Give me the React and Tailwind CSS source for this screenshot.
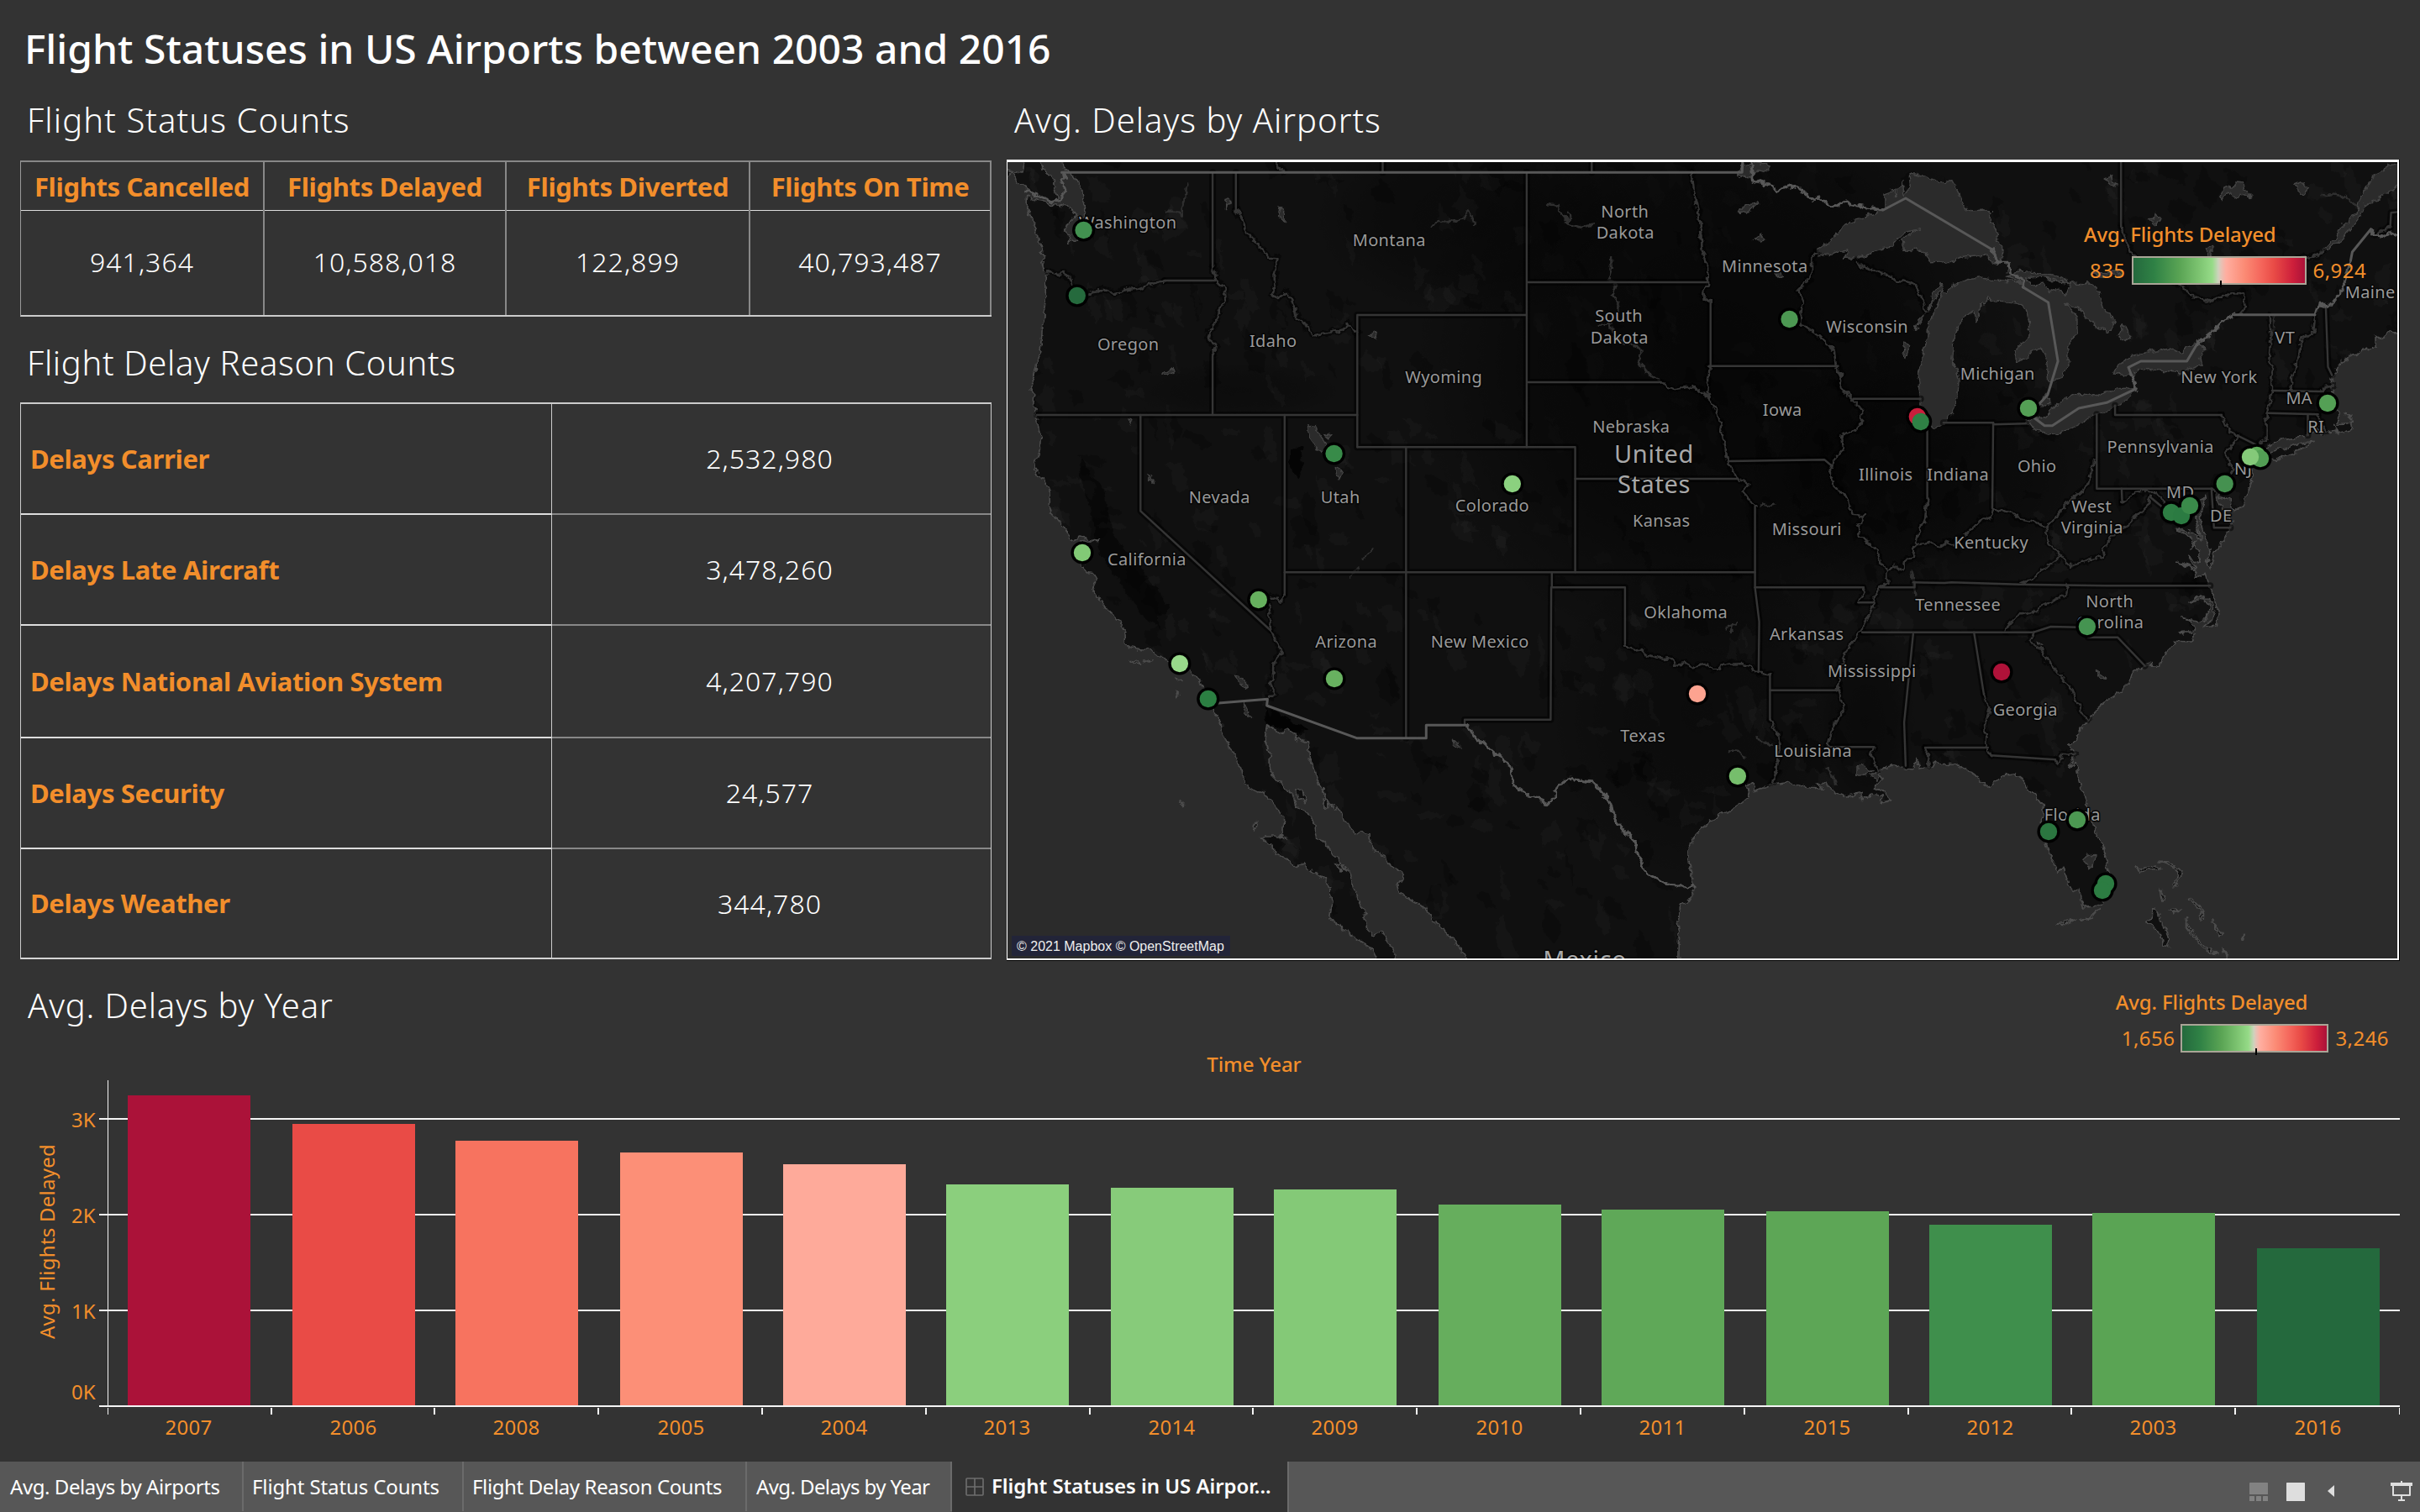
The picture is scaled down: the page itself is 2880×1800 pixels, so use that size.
import React from "react";

/* ---------------------------------------------------------------- data */

const statusCounts = [
  ["Flights Cancelled", "941,364"],
  ["Flights Delayed", "10,588,018"],
  ["Flights Diverted", "122,899"],
  ["Flights On Time", "40,793,487"],
];

const delayReasons = [
  ["Delays Carrier", "2,532,980", "h-[132px]"],
  ["Delays Late Aircraft", "3,478,260", "h-[132px]"],
  ["Delays National Aviation System", "4,207,790", "h-[134px]"],
  ["Delays Security", "24,577", "h-[132px]"],
  ["Delays Weather", "344,780", "flex-1"],
];

// year, top of the bar, colour
const years = [
  ["2007", 1304, "#ab1239"],
  ["2006", 1338, "#e94b46"],
  ["2008", 1358, "#f7735f"],
  ["2005", 1372, "#fc8f77"],
  ["2004", 1386, "#feaa9a"],
  ["2013", 1410, "#8bcf7d"],
  ["2014", 1414, "#87cb7a"],
  ["2009", 1416, "#84c977"],
  ["2010", 1434, "#66ae5d"],
  ["2011", 1440, "#5fa858"],
  ["2015", 1442, "#5da656"],
  ["2012", 1458, "#3f8f4c"],
  ["2003", 1444, "#5aa454"],
  ["2016", 1486, "#24693d"],
];

const airports = [
  [1289.6, 274, "#429150"],
  [1281.8, 352, "#256a3d"],
  [1587.6, 540, "#388b49"],
  [1799.8, 576, "#8bd17f"],
  [1288, 658, "#82ca76"],
  [1497.8, 714, "#66b05e"],
  [1403.9, 790, "#98d98a"],
  [1437.8, 832, "#2b7f42"],
  [1588, 808, "#68b160"],
  [2129.6, 380, "#4c9852"],
  [2281.8, 496, "#cb1e3c"],
  [2285.7, 502, "#2f8145"],
  [2020, 826, "#fda390"],
  [2067.9, 924, "#76be6c"],
  [2414, 486, "#549f55"],
  [2770, 480, "#54a055"],
  [2685.8, 542, "#5fad5a"],
  [2690, 546, "#529e54"],
  [2678, 544, "#84c979"],
  [2647.7, 576, "#459150"],
  [2584, 610, "#2d7d43"],
  [2596, 614, "#2b7b42"],
  [2606, 602, "#3a8a4a"],
  [2483.9, 746, "#459451"],
  [2382, 800, "#af1239"],
  [2472, 976, "#4c9852"],
  [2438, 990, "#2b7640"],
  [2506, 1052, "#2c7c42"],
  [2502, 1060, "#2c7c42"],
];

const labels = [
  ["Washington", 1342, 271.7], ["Montana", 1653, 293], ["Oregon", 1342.5, 416.7], ["Idaho", 1515, 413],
  ["Wyoming", 1718, 456], ["Nevada", 1451, 599], ["Utah", 1595, 599], ["Colorado", 1775.7, 608.7],
  ["California", 1364.7, 672.7], ["Arizona", 1602, 771], ["New Mexico", 1761, 771],
  ["North", 1933.6, 259], ["Dakota", 1934, 284], ["South", 1926.4, 383], ["Dakota", 1927, 408.7],
  ["Minnesota", 2100, 324], ["Wisconsin", 2222, 396], ["Iowa", 2121, 495], ["Nebraska", 1941, 514.7],
  ["Kansas", 1977, 627], ["Missouri", 2150, 636.7], ["Illinois", 2244, 571.7], ["Indiana", 2330, 571.7],
  ["Kentucky", 2369.5, 652.7], ["Michigan", 2377, 452], ["Ohio", 2424, 561.7], ["Pennsylvania", 2571, 538.7],
  ["New York", 2640.7, 456], ["VT", 2719, 409], ["MA", 2736, 481], ["RI", 2756, 514.7], ["Maine", 2820.5, 355],
  ["NJ", 2669.5, 565], ["MD", 2594.5, 592.7], ["DE", 2643, 621], ["West", 2489, 610], ["Virginia", 2489.6, 635],
  ["Oklahoma", 2006, 736], ["Arkansas", 2150, 762], ["Tennessee", 2330, 726.7], ["Mississippi", 2227.5, 805.7],
  ["Texas", 1955, 882.7], ["Louisiana", 2157.5, 901], ["North", 2510.5, 723], ["Carolina", 2511, 748],
  ["Georgia", 2410, 851.7], ["Florida", 2466, 976.7],
];

const bigLabels = [
  ["United", 1968, 550.7],
  ["States", 1968, 586.7],
  ["Mexico", 1885.7, 1153],
];

/* ------------------------------------------------------- map geometry */

// Each tile has its own origin and scale: [x, y, unitsPerPxX, unitsPerPxY]
const tiles = {
  nw: [1190, 170, 2.45, 3],
  n: [1800, 170, 2.8, 3],
  ne: [2300, 170, 2.7034, 3],
  sw: [1190, 640, 2.45, 3],
  s: [1800, 640, 2.8, 3],
  se: [2300, 640, 2.7034, 3],
};

// "nw 1,2 3,4 n 5,6" -> points on the map canvas
function pts(src) {
  let t = tiles.nw;
  const out = [];
  for (const tok of src.trim().split(/\s+/)) {
    if (tiles[tok]) {
      t = tiles[tok];
      continue;
    }
    const [x, y] = tok.split(",").map(Number);
    out.push(`${(t[0] + x / t[2]).toFixed(1)},${(t[1] + y / t[3]).toFixed(1)}`);
  }
  return out.join(" ");
}

const mainland = pts(`nw 185,50 185,95 212,112 235,150 240,200 252,245 230,290 240,320 225,345 195,358 205,330 190,318 198,290 225,262 215,235 190,225 150,220 110,205 80,190
 78,235 95,270 105,310 115,360 127,368 120,390 132,400 122,430 130,460 150,466 130,476 134,550 125,640 118,740 108,800 90,875 100,900 97,940 108,975 113,1020 122,1050 118,1100 100,1150 105,1175 125,1200 142,1235 143,1290 150,1325 185,1375 200,1400 210,1425 232,1410 290,1420 235,1424 220,1440
 sw 240,95 258,125 275,128 282,150 272,175 280,200 300,235 320,265 350,300 352,315 365,325 366,380 378,392 440,402 460,418 480,436 500,450 555,478 580,505 600,540 612,600 632,630 645,665 648,695 665,730 670,752 685,770 692,805 705,820 712,875 740,900 770,915 800,955 830,995 828,1040 818,1065 835,1078 815,1068 760,1068 795,1100 803,1130 840,1155 862,1172 885,1160 895,1178 945,1220 962,1255 968,1300 960,1355 1000,1400 1050,1440 1085,1470 1105,1520
 1155,1520 1150,1480 1130,1440 1115,1405 1090,1420 1070,1395 1065,1350 1050,1310 1030,1250 1020,1200 1000,1180 975,1140 950,1090 925,1075 915,1010 895,985 865,960 855,920 830,890 800,860 787,830 787,770 772,725 778,668 800,685 825,700 838,685 860,700 862,715 898,732 900,790 920,830 925,870 945,910 960,950 990,975 1000,1005 1035,1050 1078,1062 1080,1095 1100,1128 1125,1140 1135,1170 1155,1178 1175,1215 1158,1245 1165,1270 1205,1300 1245,1325 1260,1365 1295,1400 1325,1440 1350,1480 1366,1520
 s 553,1520 556,1430 550,1385 560,1310 582,1305 603,1268 605,1245 598,1200 586,1160 585,1120 600,1080 625,1045 655,1015 700,985 750,960 790,925 778,890 800,872 805,905 870,878 910,873 950,882 990,895 1040,898 1008,872 1045,880 1075,910 1110,925 1160,910 1168,938 1200,912 1235,925 1230,950 1262,935 1235,905 1205,895 1235,860 1200,850 1230,825 1270,812 1310,822 1338,825 1345,785 1355,825 1400,818 1412,795 1425,812 1490,810 1500,820 1540,850
 se 145,850 152,880 178,888 205,872 225,850 262,842 290,865 310,895 335,930 355,960 352,1020 345,1060 370,1110 390,1165 405,1195 420,1180 430,1220 435,1245 470,1260 485,1320 520,1318 545,1300 560,1250 565,1200 562,1160 545,1100 520,1040 505,970 480,900 468,850 460,800 440,820 455,770 440,740 465,720 478,680 500,650 520,620 550,590 600,550 630,520 640,490 670,462 690,452 728,458 745,415 780,380 775,370 835,372 850,345 790,335 845,330 835,300 800,285 850,300 880,290 895,250 870,220 825,235 860,210 900,230 905,260 895,290 870,320 915,315 922,270 905,220 890,170 880,130 840,150 850,120 780,85 850,110 820,70 855,90 858,50 845,30 850,10
 ne 830,1450 845,1440 820,1400 780,1375 840,1390 862,1420 855,1370 843,1330 850,1290 878,1255 872,1300 858,1340 865,1380 880,1420 890,1450
 se 895,40 882,100 890,110 905,60 925,25
 ne 935,1420 955,1378 960,1350 930,1300 912,1262 905,1235 925,1265 960,1275 965,1320 1000,1290 1028,1210 1030,1170 1020,1150 1045,1130 1060,1100 1080,1080 1120,1060 1200,1045 1240,1020 1250,1040 1300,1025 1290,1000 1305,1040 1350,1020 1348,985 1325,965 1355,1000 1300,1005 1310,980 1290,900 1280,870 1285,840 1310,790 1330,770 1380,745 1425,725 1425,690 1450,700 1470,675 1510,680 1510,50`);

const islands = [
  "nw 68,50 70,80 66,105 35,100 45,125 50,140 75,160 100,185 150,208 168,200 155,160 158,130 130,100 118,50",
  "nw 10,90 35,105 22,125",
  "ne 1080,1128 1095,1100 1140,1092 1180,1075 1228,1066 1170,1100 1100,1132",
  "sw 862,900 875,898 890,930 893,950 870,930",
  "sw 945,930 955,935 958,965 945,970 940,955",
  "sw 742,1015 750,1030 745,1045 738,1035",
  "sw 980,1165 1000,1170 995,1188",
  "sw 525,935 534,945 532,960",
  "sw 378,436 400,440 408,448 395,448",
  "sw 415,438 440,438 430,444",
  "sw 510,545 522,560 518,566",
  "sw 512,498 528,510 518,512",
  "se 648,1175 668,1192 700,1185 735,1182 730,1172 700,1175 680,1180 665,1185",
  "se 730,1155 760,1158 785,1180 803,1190 798,1212 780,1250 775,1240 790,1215 785,1190 760,1168",
  "se 710,1325 725,1330 735,1370 750,1400 762,1440 758,1460 742,1455 735,1420 718,1400 688,1372 705,1360",
  "se 760,1332 795,1327 775,1340",
  "se 815,1290 830,1285 850,1300 870,1330 868,1365 855,1355 866,1335 840,1300",
  "se 815,1355 820,1385 850,1430 880,1465 920,1490 885,1480 850,1440 815,1390",
  "se 900,1370 915,1390 933,1415 922,1418",
  "se 993,1425 1001,1422 996,1438",
  "se 930,1465 952,1500 940,1490",
  "se 400,1380 440,1370 465,1362 430,1382",
  "se 480,1366 520,1345 540,1325 515,1355",
  "se 730,1260 745,1280 738,1300",
].map(pts);

const lakes = [
  // Superior
  "n 1015,385 1060,350 1120,285 1180,262 1240,235 1240,180 1280,165 1275,195 1300,140 1305,190 1325,150 1322,110 1345,115 1400,130 ne 20,140 65,137 85,180 100,225 125,245 190,242 185,280 210,320 205,350 228,380 215,430 180,420 178,402 100,408 45,430 30,425 n 1400,428 1370,390 1340,378 1305,390 1296,350 1335,315 1360,308 1310,318 1260,370 1210,385 1160,410 1110,412 1120,380 1070,395 1020,405",
  // Michigan and Huron
  "n 1342,668 1352,635 1385,600 1400,540 1425,500 1435,530 1410,600 1388,640 1385,700 1368,740 1365,790 1352,830 1360,900 1356,960 1385,1015 ne 5,1018 35,1000 60,970 80,920 84,850 78,820 62,770 66,720 80,650 100,625 130,600 140,640 150,590 180,555 210,565 270,570 300,590 310,640 308,690 262,745 270,780 300,770 320,740 350,735 365,770 375,850 405,845 435,800 435,730 465,670 465,620 430,575 470,590 495,625 530,660 570,675 590,640 550,590 530,520 510,505 440,500 415,480 340,465 270,460 240,480 290,500 200,488 150,480 110,485 65,510 n 1445,540 1425,530",
  "ne 350,905 360,892 380,915 375,935 345,935",
  // Erie
  "ne 302,990 350,985 375,970 375,950 400,935 430,910 470,895 530,905 590,878 655,875 640,900 590,945 530,970 470,1005 430,1030 375,1042 335,1030",
  // Ontario
  "ne 585,825 600,790 640,760 700,745 760,735 800,750 810,735 855,715 875,740 860,770 865,790 800,822 730,812 660,812 630,832 600,830",
  // St Lawrence
  "ne 1510,145 1440,195 1400,215 1370,270 1320,340 1270,385 1250,388 1300,340 1305,312 1340,280 1365,240 1370,215 1400,150 1425,110 1510,65",
  "nw 898,1015 920,1010 925,1030 940,1055 955,1080 940,1105 918,1085 900,1045",
  "nw 945,1035 965,1045 955,1058",
  "nw 978,1165 990,1160 1000,1180 985,1200",
  "sw 685,490 700,495 722,525 715,538 700,520",
  "sw 708,590 720,605 732,638 715,625",
  "sw 1320,720 1340,735 1342,750 1330,745",
  "se 500,1128 522,1140 518,1165 505,1178 486,1155",
  "s 1148,825 1168,810 1198,835 1170,850 1148,842",
  "s 1195,850 1225,845 1215,865",
  "n 752,115 765,80 800,69 860,80 855,100 820,92 790,125",
  "n 755,248 770,225 818,215 790,240 780,255",
  "n 808,345 825,330 842,345 828,360",
  "n 875,468 900,465 903,475 888,480",
  "n 1300,735 1310,712 1318,720 1315,750 1308,762",
  "nw 432,1180 442,1188 450,1218 440,1205",
  "nw 1075,685 1090,672 1100,700 1085,690",
  "nw 816,228 830,240 828,280 810,262",
  "nw 475,825 498,806 507,818 490,828",
  "nw 372,985 385,985 380,1005",
  "nw 652,205 665,200 678,215 660,222 655,245 658,215",
  "ne 925,190 940,165 960,160 975,138 995,140 1000,165 1028,192 1000,185 985,198 960,180 930,200",
  "ne 1165,150 1185,140 1212,160 1190,185 1170,165",
  "ne 553,125 575,116 582,140 600,152 570,145",
  "ne 595,690 612,650 622,660 635,690 618,708",
  "ne 695,272 715,270 720,255 735,275 715,290",
  "ne 880,385 900,365 905,380 890,405",
  "ne 510,465 600,462 608,470 540,475",
  "se 525,475 545,488 557,505 540,502",
  "se 338,372 352,380 345,385",
].map(pts);

const creeks = [
  "nw 480,245 515,245 530,262 528,240 540,200 545,150",
  "nw 1258,305 1268,290 1300,280 1345,275 1368,240 1385,290",
  "n 118,220 155,225 165,260 188,290 225,302 272,292",
  "n 185,245 190,285",
  "n 328,412 330,450 320,485 345,510 335,545 352,570 350,620",
  "n 290,650 325,645 330,670 360,710 405,720 430,745 418,775 450,820 490,848",
  "n 825,1298 835,1288 850,1298 870,1292",
  "s 715,322 750,300",
  "s 730,310 728,342",
  "s 722,760 755,765 775,785",
  "s 815,712 835,735 858,740",
  "s 1048,820 1065,845 1075,875",
  "s 1328,125 1335,150 1345,205",
  "ne 1250,180 1320,190 1365,220",
  "ne 1095,615 1100,650 1092,690",
  "sw 1020,140 1045,108",
  "sw 1060,75 1085,40",
].map(pts);

// Borders along surveyed lines
const straight = [
  "nw 620,106 620,440", "nw 620,755 620,972", "nw 480,492 628,492", "nw 688,106 688,240",
  "nw 108,972 1042,972", "nw 1042,1087 1042,615 1536,615", "nw 1536,106 1536,1087",
  "nw 1042,1087 1540,1087 n 209,1087 s 209,124", "nw 410,972 410,1315 sw 788,330",
  "nw 830,972 sw 830,205", "nw 1184,1087 sw 1184,716", "sw 830,124 1500,124 s 808,124",
  "n 48,498 650,498", "n 48,855 495,855", "n 209,1200 750,1200", "n 660,572 660,797", "n 655,797 1085,797",
  "n 808,1298 s 808,178 822,300 820,480", "n 725,1137 1040,1132 1065,1155", "n 1135,914 1360,914",
  "n 1382,1020 1382,1270", "ne 195,1000 192,1305", "ne 35,1000 195,1000", "ne 195,1006 300,1003",
  "ne 528,970 528,1235 900,1235", "ne 587,938 587,972 930,972", "ne 897,1235 905,1375 958,1375",
  "ne 608,1235 610,1285", "ne 980,1045 1040,1078", "s 1335,160 1440,162 se 60,160 280,167 560,172 893,172",
  "s 808,178 1168,178", "s 1152,232 1205,232", "s 1225,178 1340,178 1340,160",
  "s 1165,338 1500,338 se 325,338 380,318 470,320", "se 500,356 595,356 683,458",
  "se 133,338 165,560", "se 188,778 395,793", "s 1375,750 1500,750 se 178,750",
  "s 1335,345 1305,660 1310,815", "s 1052,748 1205,748", "s 858,545 1090,545", "s 858,487 858,650",
  "s 131,124 131,178 375,178 375,380", "s 129,178 127,650 0,650 sw 1355,650 1355,668",
  "ne 1092,885 1250,888", "ne 1078,965 1240,970", "ne 1207,970 1207,1045", "ne 1265,585 1272,800 1285,830",
  "ne 606,60 606,300", "nw 1116,60 1116,106", "n 264,60 264,106", "ne 1510,245 1475,250 1472,300",
  "ne 700,1265 760,1320",
].map(pts);

// Borders along rivers and ridges
const winding = [
  "nw 620,440 630,490 655,520 658,545 640,600 628,645 612,670 607,700 628,720 622,755",
  "nw 140,460 165,468 185,465 205,480 215,520 225,546 255,545 275,530 310,527 335,540 370,525 400,522 440,505 480,492",
  "nw 688,240 712,290 715,315 745,350 770,390 785,410 810,412 800,470 802,510 793,540 808,555 835,530 850,560 870,630 895,650 910,690 945,680 1000,670 1018,645 1040,680",
  "nw 800,60 810,85 825,95 828,106",
  "sw 830,205 820,230 810,215 790,215",
  "sw 785,240 792,330 805,375 825,410 800,440 798,500 783,520 800,560 795,572 780,572",
  "n 495,855 540,880 580,872 620,880 660,915",
  "n 598,106 605,180 625,280 632,380 650,450 650,510 628,540 660,572",
  "n 655,797 650,850 648,890 660,915 690,990 705,1060 715,1130 750,1200 785,1220 768,1250 808,1298",
  "n 1015,395 998,410 995,480 950,530 968,560 958,640 1020,690 1075,745 1080,800 1095,830 1090,870 1130,912 1165,955 1165,1000 1145,1025 1095,1045 1100,1095 1070,1135 1060,1175 1068,1220 1120,1275 1130,1325 1170,1330 1150,1370 1155,1400 1215,1455 s 1225,90 1250,122 1250,165 1218,178 1200,245 1165,325 1110,410 1095,460 1085,545 1105,610 1060,690 1052,748",
  "n 1145,420 1170,445 1260,475 1280,490 1330,500 1355,530 1370,580 1378,605",
  "n 1382,1270 1375,1340 1340,1430 s 1335,70 1305,85 1300,115 1270,100 1250,122",
  "n 1340,1435 1400,1430 1420,1445 1450,1425 1475,1435 ne 105,1400 150,1350 190,1335 195,1305 250,1320 280,1345 330,1355 370,1375 400,1330 430,1290 500,1220 520,1130",
  "ne 370,1375 365,1400 375,1430 415,1475 se 440,102 520,75 545,65 555,30 575,0 ne 600,1385 640,1350 690,1300 700,1265",
  "ne 610,1285 650,1250 700,1245 720,1245 740,1280 770,1320",
  "se 415,66 350,115 320,150 285,162",
  "se 437,165 430,195 400,220 350,245 330,265 270,280 245,310 232,338",
  "se 325,338 308,370 345,395 380,455 410,495 445,540 460,585 485,635 502,645",
  "se 165,560 182,620 168,670 172,735 188,778",
  "se 395,793 403,815 415,770 455,775",
  "s 1375,750 1390,790 1385,815",
  "s 1205,748 1195,780 1218,835",
  "s 1168,178 1175,195 1152,230",
  "s 375,380 400,402 430,398 450,420 500,432 525,430 545,455 580,450 605,465 640,450 670,470 720,452 770,450 820,482 858,487",
  "s 858,650 885,700 890,750 880,830 868,875",
  "ne 930,972 955,1030 980,1045 945,1110 955,1145 975,1170 930,1210 905,1250",
  "ne 1085,615 1090,670 1082,780 1095,800 1092,885 1075,965 1075,1060 1045,1080",
  "ne 1230,620 1225,680 1185,700 1180,750 1160,820 1152,885",
  "ne 1250,888 1270,872 1290,868",
  "ne 1240,970 1250,1010 1262,1035",
  "ne 606,300 640,400 720,460 800,510 830,545 890,565 940,545 1000,535 1005,590 985,615",
  "ne 1180,415 1220,408 1260,388",
  "ne 1472,300 1425,330",
].map(pts);

const countryStraight = [
  "nw 180,106 1500,106 n 765,106 767,60",
  "n 1235,240 1310,198 ne 190,380",
  "ne 290,515 372,570 403,780 370,900 345,930 318,975 360,1010 385,1010 470,948 560,928 655,878",
  "ne 640,830 630,802 670,780 818,780 850,720",
  "ne 970,614 1230,614",
  "ne 1345,420 1350,390 1410,308",
  "sw 630,592 780,577 778,600 1040,716 1243,716 1243,670 1365,670",
].map(pts);

const countryWinding = [
  "nw 75,172 155,210 180,200 190,170 180,140 192,125 180,106",
  "n 792,60 802,135 870,155 880,172 930,155 960,165 1000,205 1020,195 1065,230 1110,210 1130,222 1235,240",
  "ne 190,380 210,430 245,430 250,465 295,495 290,515",
  "ne 655,878 640,830",
  "ne 850,720 895,680 940,630 970,614",
  "ne 1230,614 1240,580 1280,580 1320,520 1345,420",
  "ne 1410,308 1435,340 1470,320 1510,330",
  "sw 1365,670 1380,705 1440,770 1470,790 1490,830 1500,885 1540,920 s 120,950 135,930 155,880 190,862 265,873 315,930 350,1020 410,1090 420,1145 450,1200 520,1237 560,1240 585,1257 605,1245",
].map(pts);

// Faint terrain shading from a seeded generator
const terrain = (() => {
  let seed = 7;
  const rnd = () => (seed = (seed * 16807) % 2147483647) / 2147483647;
  return Array.from({ length: 900 }, () => {
    const cx = 1198 + rnd() * 1657;
    const cy = 190 + rnd() * 953;
    const plains = cx > 1830 && cx < 2330 && cy < 720;
    const rx = 4 + rnd() * 15;
    const ry = 5 + rnd() * 24;
    const n = 8;
    const p = [];
    for (let i = 0; i < n; i++) {
      const a = (i / n) * 6.283;
      const k = 0.35 + rnd() * 0.8;
      p.push(`${(cx + Math.cos(a) * rx * k + Math.sin(a) * 4).toFixed(0)},${(cy + Math.sin(a) * ry * k).toFixed(0)}`);
    }
    const light = rnd() > 0.4;
    return { p: p.join(" "), fill: light ? "#fff" : "#000", o: light ? (plains ? 0.01 : 0.022) : 0.25 };
  });
})();

/* ---------------------------------------------------------- components */

function Heading({ children, className = "" }) {
  return (
    <h2 className={`flex h-14 items-center whitespace-pre text-[40px] font-light text-white ${className}`}>
      {children}
    </h2>
  );
}

function StatusTable() {
  return (
    <div className="ml-6 grid h-[186px] w-[1156px] grid-cols-[290px_288px_290px_287px] border-t-2 border-b-2 border-l border-t-[#888] border-b-[#ccc] border-l-[#999]">
      {statusCounts.map(([name, value]) => (
        <div key={name} className="flex flex-col border-r-2 border-[#888]">
          <div className="flex h-[58px] items-center justify-center border-b border-[#ddd] pt-0.5 text-[31px] font-bold tracking-[-0.35px] whitespace-nowrap text-[#f28e2b]">
            {name}
          </div>
          <div className="flex flex-1 items-center justify-center pb-[3px] text-[32px] font-light tracking-[1px] text-white">{value}</div>
        </div>
      ))}
    </div>
  );
}

function ReasonTable() {
  return (
    <div className="ml-6 flex h-[663px] w-[1156px] flex-col border border-t-2 border-[#ccc]">
      {delayReasons.map(([name, value, height], i) => (
        <div key={name} className={`flex ${height}`}>
          <div className={`flex w-[632px] items-center border-r border-r-[#ccc] border-b-[#ddd] pl-[11px] text-[31px] font-bold tracking-[-0.36px] text-[#f28e2b] ${i < 4 ? "border-b-2" : "border-b"}`}>
            {name}
          </div>
          <div className={`flex flex-1 items-center justify-center pr-1 text-[32px] font-light tracking-[1px] text-white ${i < 4 ? "border-b-2 border-[#888]" : "border-b border-[#ccc]"}`}>
            {value}
          </div>
        </div>
      ))}
    </div>
  );
}

function Legend({ min, max, barClass, tickClass }) {
  return (
    <div className="text-[24px] leading-none text-[#f28e2b]">
      <div className="font-medium tracking-[-0.15px] whitespace-nowrap">Avg. Flights Delayed</div>
      <div className="mt-[14px] flex items-center gap-[7px] pl-[7px] tracking-[0.45px]">
        <span>{min}</span>
        <div className={`relative border-2 border-[#aaa597] bg-[linear-gradient(90deg,#24693d,#2f8145_12%,#5aa454_27%,#7cc370_38%,#96db88_46%,#cdd3bd_49.5%,#e5c3b6_51%,#ffaea0_54%,#fb8a74_65%,#f4645a_75%,#e94b46_82%,#cd1f3b_93%,#ab1239)] ${barClass}`}>
          <div className={`absolute -bottom-[5px] h-2 w-0.5 bg-black ${tickClass}`} />
        </div>
        <span className="pl-px">{max}</span>
      </div>
    </div>
  );
}

function Lines({ list, stroke, width, opacity = 1 }) {
  return (
    <g fill="none" stroke={stroke} strokeWidth={width} strokeLinejoin="round" strokeLinecap="round" opacity={opacity}>
      {list.map((p, i) => (
        <polyline key={i} points={p} />
      ))}
    </g>
  );
}

function AirportMap() {
  return (
    <div className="relative h-[954px] w-[1658px] border-r border-b border-black">
      <div className="h-full w-full border border-t-[3px] border-r-2 border-b-2 border-white">
        <svg className="block h-full w-full" viewBox="1199 193 1654 948" preserveAspectRatio="none">
          <defs>
            <clipPath id="land">
              <polygon points={mainland} />
              {islands.map((p, i) => (
                <polygon key={i} points={p} />
              ))}
            </clipPath>
            <filter id="rough" x="1190" y="180" width="1680" height="980" filterUnits="userSpaceOnUse" colorInterpolationFilters="sRGB">
              <feTurbulence type="fractalNoise" baseFrequency="0.11" numOctaves="3" seed="4" />
              <feDisplacementMap in="SourceGraphic" scale="9" xChannelSelector="R" yChannelSelector="G" />
            </filter>
            <radialGradient id="shade">
              <stop offset="0" stopColor="#000" stopOpacity="0.6" />
              <stop offset="0.6" stopColor="#000" stopOpacity="0.4" />
              <stop offset="1" stopColor="#000" stopOpacity="0" />
            </radialGradient>
          </defs>
          <rect x="1198" y="190" width="1660" height="955" fill="#2b2b2b" />
          <g filter="url(#rough)">
            <g fill="#101010">
              <polygon points={mainland} />
              {islands.map((p, i) => (
                <polygon key={i} points={p} />
              ))}
            </g>
            <g clipPath="url(#land)">
              <ellipse cx="2040" cy="430" rx="360" ry="360" fill="url(#shade)" />
              <ellipse cx="2290" cy="560" rx="220" ry="150" fill="url(#shade)" opacity="0.7" />
              <ellipse cx="1760" cy="260" rx="200" ry="120" fill="url(#shade)" opacity="0.6" />
              <ellipse cx="2020" cy="850" rx="180" ry="200" fill="url(#shade)" opacity="0.5" />
              <ellipse cx="2220" cy="860" rx="60" ry="120" fill="url(#shade)" opacity="0.6" />
              <ellipse cx="1470" cy="465" rx="130" ry="34" fill="url(#shade)" opacity="0.4" />
              <polygon points={pts("nw 240,1130 262,1180 300,1230 330,1400 sw 360,40 420,120 490,240 480,330 430,300 350,160 290,60 nw 270,1330 228,1170")} fill="#000" opacity="0.5" />
              <polygon points={pts("sw 775,600 900,690 860,710 775,660")} fill="#000" opacity="0.8" />
              <polygon points={pts("nw 845,1100 880,1080 885,1160 865,1200 845,1160")} fill="#000" opacity="0.7" />
              {terrain.map((t, i) => (
                <polygon key={i} points={t.p} fill={t.fill} opacity={t.o} />
              ))}
            </g>
            <g fill="none" stroke="#4c4c4c" strokeWidth="1.6" strokeLinejoin="round">
              <polygon points={mainland} />
              {islands.map((p, i) => (
                <polygon key={i} points={p} />
              ))}
            </g>
            <g fill="#2b2b2b" stroke="#454545" strokeWidth="1.4">
              {lakes.map((p, i) => (
                <polygon key={i} points={p} />
              ))}
              <polygon points={pts("ne 295,482 340,478 390,492 440,500 435,530 425,545 405,520 380,530 350,505 320,508")} fill="#0a0a0a" />
            </g>
            <Lines list={creeks} stroke="#2f2f2f" width="2.4" />
          </g>

          <Lines list={straight} stroke="#000" width="8" opacity={0.5} />
          <g filter="url(#rough)">
            <Lines list={winding} stroke="#000" width="8" opacity={0.5} />
            <Lines list={winding} stroke="#353535" width="2.5" />
          </g>
          <Lines list={straight} stroke="#353535" width="2.4" />
          <Lines list={countryStraight} stroke="#585858" width="3" />
          <g filter="url(#rough)">
            <Lines list={countryWinding} stroke="#585858" width="3" />
          </g>

          <g textAnchor="middle" fill="#999" stroke="#060606" strokeWidth="3" strokeLinejoin="round" style={{ paintOrder: "stroke" }}>
            <g fontSize="20" letterSpacing="0.35">
              {labels.map(([t, x, y], i) => (
                <text key={i} x={x + 0.2} y={y}>
                  {t}
                </text>
              ))}
            </g>
            <g fontSize="29" letterSpacing="0.6" fill="#a8a8a8">
              {bigLabels.map(([t, x, y]) => (
                <text key={t} x={x + 0.5} y={y}>
                  {t}
                </text>
              ))}
            </g>
          </g>

          {airports.map(([x, y], i) => (
            <circle key={i} cx={x} cy={y} r="13.6" fill="#000" />
          ))}
          {airports.map(([x, y, c], i) => (
            <circle key={i} cx={x} cy={y} r="10.2" fill={c} />
          ))}
        </svg>
      </div>
      <div className="absolute top-[77px] left-[1282px]">
        <Legend min="835" max="6,924" barClass="h-[34px] w-[208px]" tickClass="left-[103px]" />
      </div>
      <div className="absolute bottom-[5px] left-1.5 flex h-6 w-[260px] items-center bg-[#222438] pt-px pl-1.5 font-['Liberation_Sans',sans-serif] text-[16px] whitespace-nowrap text-[#eee]">
        © 2021 Mapbox © OpenStreetMap
      </div>
    </div>
  );
}

function YearChart() {
  const x0 = 128.5;
  const step = (2855.5 - x0) / years.length;
  return (
    <svg className="block h-[496px] w-[2880px]" viewBox="0 1244 2880 496">
      <g fill="#f28e2b" fontSize="24">
        <text x="1492.5" y="1276" textAnchor="middle" fontWeight="500" letterSpacing="-0.1">
          Time Year
        </text>
        <text transform="translate(64.5 1478) rotate(-90)" textAnchor="middle" letterSpacing="0.25">
          Avg. Flights Delayed
        </text>
        {[["3K", 1342], ["2K", 1456], ["1K", 1570], ["0K", 1666]].map(([t, y]) => (
          <text key={t} x="113.5" y={y} textAnchor="end">
            {t}
          </text>
        ))}
      </g>
      <g fill="#f5f5f5">
        <rect x="118" y="1331" width="2738" height="2" />
        <rect x="118" y="1445" width="2738" height="2" />
        <rect x="118" y="1559" width="2738" height="2" />
        <rect x="118" y="1673" width="2738" height="2" />
        <rect x="128" y="1286" width="1" height="388" />
        {Array.from({ length: 15 }, (_, i) => (
          <rect key={i} x={i % 14 === 0 ? Math.floor(x0 + i * step - 0.2) : Math.round(x0 + i * step - 1.6)} y="1676" width={i % 14 === 0 ? 1 : 2} height="8" />
        ))}
      </g>
      {years.map(([year, top, color], i) => {
        const x = 2 * Math.round((152.5 + i * 194.85) / 2);
        return (
          <g key={year}>
            <rect x={x} y={top} width="146" height={1673 - top} fill={color} />
            <text x={x + 72.5} y="1708" textAnchor="middle" fontSize="24" letterSpacing="0.3" fill="#f28e2b">
              {year}
            </text>
          </g>
        );
      })}
    </svg>
  );
}

function TabBar() {
  const tabs = [
    ["Avg. Delays by Airports", "w-[290px] pl-3 tracking-[-0.42px]"],
    ["Flight Status Counts", "w-[262px] pl-2.5 tracking-[-0.12px]"],
    ["Flight Delay Reason Counts", "w-[337px] pl-[10px] tracking-[-0.38px]"],
    ["Avg. Delays by Year", "w-[244px] pl-[11px] tracking-[-0.6px]"],
  ];
  return (
    <div className="flex h-[60px] bg-[#575757] text-[24px] whitespace-nowrap text-white">
      {tabs.map(([t, c]) => (
        <div key={t} className={`flex h-[59px] items-center border-r-2 border-[#6b6b6b] ${c}`}>
          {t}
        </div>
      ))}
      <div className="flex w-[401px] items-center gap-[9px] border-r-2 border-[#6b6b6b] bg-[#333] pl-4 font-semibold tracking-[-0.05px]">
        <svg className="h-[22px] w-[22px]" viewBox="0 0 22 22" fill="none" stroke="#6e6e6e" strokeWidth="1.6">
          <rect x="1" y="1" width="20" height="20" rx="1" />
          <path d="M11 1v20M1 11h20" />
        </svg>
        <span className="-mt-[3px]">Flight Statuses in US Airpor...</span>
      </div>
      <div className="ml-auto flex items-start pt-[23px] pr-[9px]">
        <svg className="h-[24px] w-[194px]" viewBox="2677 1763 194 24">
          <g fill="#828282">
            <rect x="2677" y="1765" width="22" height="14" rx="0.6" />
            <rect x="2677" y="1781" width="6" height="6" rx="0.6" />
            <rect x="2685" y="1781" width="6" height="6" rx="0.6" />
            <rect x="2693" y="1781" width="6" height="6" rx="0.6" />
          </g>
          <g fill="#dedede">
            <rect x="2721" y="1765" width="22" height="22" rx="0.6" />
            <path d="M2778 1768v14l-8-7z" />
            <path d="M2857 1763h2v2h12v4h-26v-4h12z" />
            <rect x="2854" y="1785" width="8" height="2" />
            <rect x="2857" y="1780" width="2" height="5" />
            <path d="M2848 1768v12h20v-12" fill="none" stroke="#dedede" strokeWidth="2" strokeLinejoin="round" />
          </g>
        </svg>
      </div>
    </div>
  );
}

export default function App() {
  return (
    <div className="flex h-[1800px] w-[2880px] flex-col overflow-hidden bg-[#333] font-['Noto_Sans',sans-serif] text-white">
      <h1 className="flex h-[115px] items-center pl-[29px] text-[48px] font-medium">
        Flight Statuses in US Airports between 2003 and 2016
      </h1>
      <div className="flex h-[1029px]">
        <div className="w-[1198px]">
          <Heading className="mb-5 pl-[32px] tracking-[1.1px]">Flight Status Counts</Heading>
          <StatusTable />
          <Heading className="mt-[27px] mb-[19px] pl-[32px] tracking-[0.65px]">Flight Delay Reason Counts</Heading>
          <ReasonTable />
        </div>
        <div>
          <Heading className="mb-[19px] pl-[9px] tracking-[1px]">Avg. Delays by Airports</Heading>
          <AirportMap />
        </div>
      </div>
      <div className="flex h-[100px] justify-between pr-[37px] pt-[25px]">
        <Heading className="pl-[33px] tracking-[0.85px]">Avg. Delays by Year</Heading>
        <div className="pt-[12px]">
          <Legend min="1,656" max="3,246" barClass="h-[34px] w-[176px]" tickClass="left-[87px]" />
        </div>
      </div>
      <YearChart />
      <TabBar />
    </div>
  );
}
